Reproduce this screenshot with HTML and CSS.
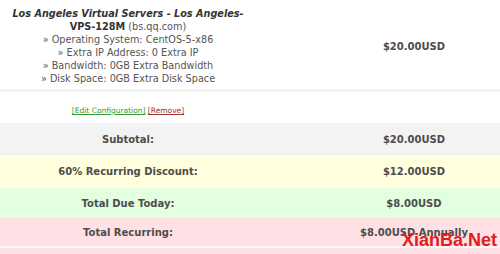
FILE: index.html
```html
<!DOCTYPE html>
<html lang="en">
<head>
    <meta charset="UTF-8">
    <title>Order Summary</title>
    <link rel="stylesheet" href="styles.css">
</head>
<body>
    <div class="cart">
        <div class="row product">
            <div class="desc">
                <em class="group">Los Angeles Virtual Servers - Los Angeles-</em><strong>VPS-128M</strong> (bs.qq.com)<br>
                &raquo; Operating System: CentOS-5-x86<br>
                &raquo; Extra IP Address: 0 Extra IP<br>
                &raquo; Bandwidth: 0GB Extra Bandwidth<br>
                &raquo; Disk Space: 0GB Extra Disk Space
            </div>
            <div class="amount">$20.00USD</div>
        </div>
        <div class="row actions">
            <div class="desc links">
                <a href="#" class="edit">[Edit Configuration]</a> <a href="#" class="remove">[Remove]</a>
            </div>
            <div class="amount"></div>
        </div>
        <div class="row total subtotal">
            <div class="desc">Subtotal:</div>
            <div class="amount">$20.00USD</div>
        </div>
        <div class="row total discount">
            <div class="desc">60% Recurring Discount:</div>
            <div class="amount">$12.00USD</div>
        </div>
        <div class="row total today">
            <div class="desc">Total Due Today:</div>
            <div class="amount">$8.00USD</div>
        </div>
        <div class="row total recurring">
            <div class="desc">Total Recurring:</div>
            <div class="amount">$8.00USD Annually</div>
        </div>
        <div class="row total recurring-end"></div>
    </div>
    <div class="watermark">XianBa.Net</div>
</body>
</html>
```

FILE: styles.css
```css
body {
    margin: 0;
    width: 500px;
    height: 254px;
    overflow: hidden;
    position: relative;
    background-color: #fff;
    font-family: 'DejaVu Sans', Verdana, sans-serif;
    font-size: 9.7px;
    color: #555;
}

.cart {
    width: 572px;
}

.row {
    display: grid;
    grid-template-columns: 256px 316px;
    align-items: center;
    text-align: center;
}

.desc {
    padding: 0 5px;
}

.amount {
    font-weight: bold;
    font-size: 10px;
    color: #4d4d4d;
}

.product {
    padding: 7px 0 4px;
    line-height: 13px;
    border-bottom: 3px solid #f4f4f4;
}

.product .group,
.product strong {
    font-weight: bold;
    color: #333;
}

.actions {
    height: 31px;
    padding-top: 6px;
    box-sizing: border-box;
    font-size: 7.5px;
}

.links a {
    text-decoration: underline;
}

.links .edit {
    color: #339933;
}

.links .remove {
    color: #993333;
}

.total {
    box-sizing: border-box;
    font-size: 10px;
}

.total .desc {
    font-weight: bold;
    color: #4d4d4d;
}

.subtotal {
    height: 32px;
    padding-top: 2px;
    background-color: #f3f3f3;
    border-bottom: 2px solid #eeeef8;
}

.discount {
    height: 33px;
    background-color: #ffffdd;
}

.today {
    height: 30px;
    background-color: #e4ffe0;
}

.recurring {
    height: 30px;
    background-color: #ffe0e4;
    border-bottom: 2px solid #fdf3f5;
}

.recurring-end {
    height: 10px;
    background-color: #ffe0e4;
}

.watermark {
    position: absolute;
    right: 3px;
    bottom: 3px;
    font-family: 'Liberation Sans', Arial, sans-serif;
    font-weight: bold;
    font-size: 18px;
    color: #e0201c;
}
```
